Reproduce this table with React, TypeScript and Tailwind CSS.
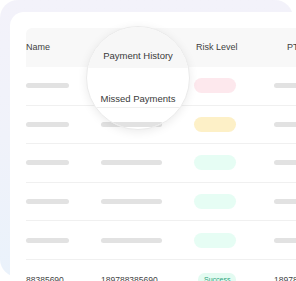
import React from "react";

type Risk = "high" | "mid" | "low" | "success";

const rows: { risk: Risk }[] = [
  { risk: "high" },
  { risk: "mid" },
  { risk: "low" },
  { risk: "low" },
  { risk: "low" },
];

function Bar({ w }: { w: string }) {
  return <div className={`h-[5px] rounded-full bg-[#e2e2e2] ${w}`} />;
}

function RiskPill({ risk }: { risk: Risk }) {
  if (risk === "high") return <div className="h-[15px] w-[42px] rounded-full bg-[#fde8ed]" />;
  if (risk === "mid") return <div className="h-[15px] w-[42px] rounded-full bg-[#fdf0c7]" />;
  return <div className="h-[15px] w-[42px] rounded-full bg-[#e6fdf4]" />;
}

export default function App() {
  return (
    <div
      className="relative h-[281px] w-[296px] overflow-hidden bg-white text-[#3f3f3f]"
      style={{ fontFamily: "'Liberation Sans', Arial, sans-serif" }}
    >
      {/* soft backdrop panel */}
      <div className="h-[277px] w-[293px] rounded-[18px] bg-gradient-to-b from-[#f3f2fa] via-[#f0f2fa] to-[#eaf2fb] pl-[10px] pt-[12px]">
        <div className="h-[290px] w-[300px] rounded-tl-[14px] bg-white pl-[16px] pt-[16px]">
          {/* header */}
          <div className="flex h-[39px] items-center rounded-tl-[6px] bg-[#f8f8f8] text-[9px]">
            <div className="w-[75px] shrink-0">Name</div>
            <div className="w-[93px] shrink-0"></div>
            <div className="w-[80px] shrink-0 pl-[2px]">Risk Level</div>
            <div className="shrink-0 pl-[13px]">PT</div>
          </div>

          {rows.map((r, i) => (
            <div key={i} className="flex h-[38.6px] items-center border-b border-[#f0f0f0]">
              <div className="w-[75px] shrink-0">
                <Bar w="w-[43px]" />
              </div>
              <div className="w-[93px] shrink-0">
                <Bar w="w-[61px]" />
              </div>
              <div className="w-[80px] shrink-0">
                <RiskPill risk={r.risk} />
              </div>
              <div className="shrink-0">
                <Bar w="w-[60px]" />
              </div>
            </div>
          ))}

          {/* last visible row */}
          <div className="flex items-start pt-[16px] text-[8.5px] leading-none text-[#444]">
            <div className="w-[75px] shrink-0">88385690</div>
            <div className="w-[93px] shrink-0">189788385690</div>
            <div className="-mt-[3px] w-[80px] shrink-0 pl-[4px]">
              <span className="inline-block rounded-full bg-[#e3fbf1] px-[6px] py-[3px] text-[7px] leading-none text-[#2ba27a]">
                Success
              </span>
            </div>
            <div className="shrink-0">189788385690</div>
          </div>
        </div>
      </div>

      {/* magnifier lens over the column header */}
      <div className="absolute left-[86px] top-[26px] h-[104px] w-[104px] overflow-hidden rounded-full border border-[#ebebeb] bg-white shadow-[0_2px_10px_rgba(0,0,0,0.08)]">
        <div className="flex h-[41px] items-end justify-center bg-[#f7f7f7] pb-[5px] text-[9.5px] text-[#3a3a3a]">
          Payment History
        </div>
        <div className="flex h-[40px] items-center justify-center border-b border-[#efefef] pt-[24px] text-[9.5px] text-[#3a3a3a]">
          Missed Payments
        </div>
        <div className="pl-[15px] pt-[14px]">
          <Bar w="w-[61px]" />
        </div>
      </div>
    </div>
  );
}
